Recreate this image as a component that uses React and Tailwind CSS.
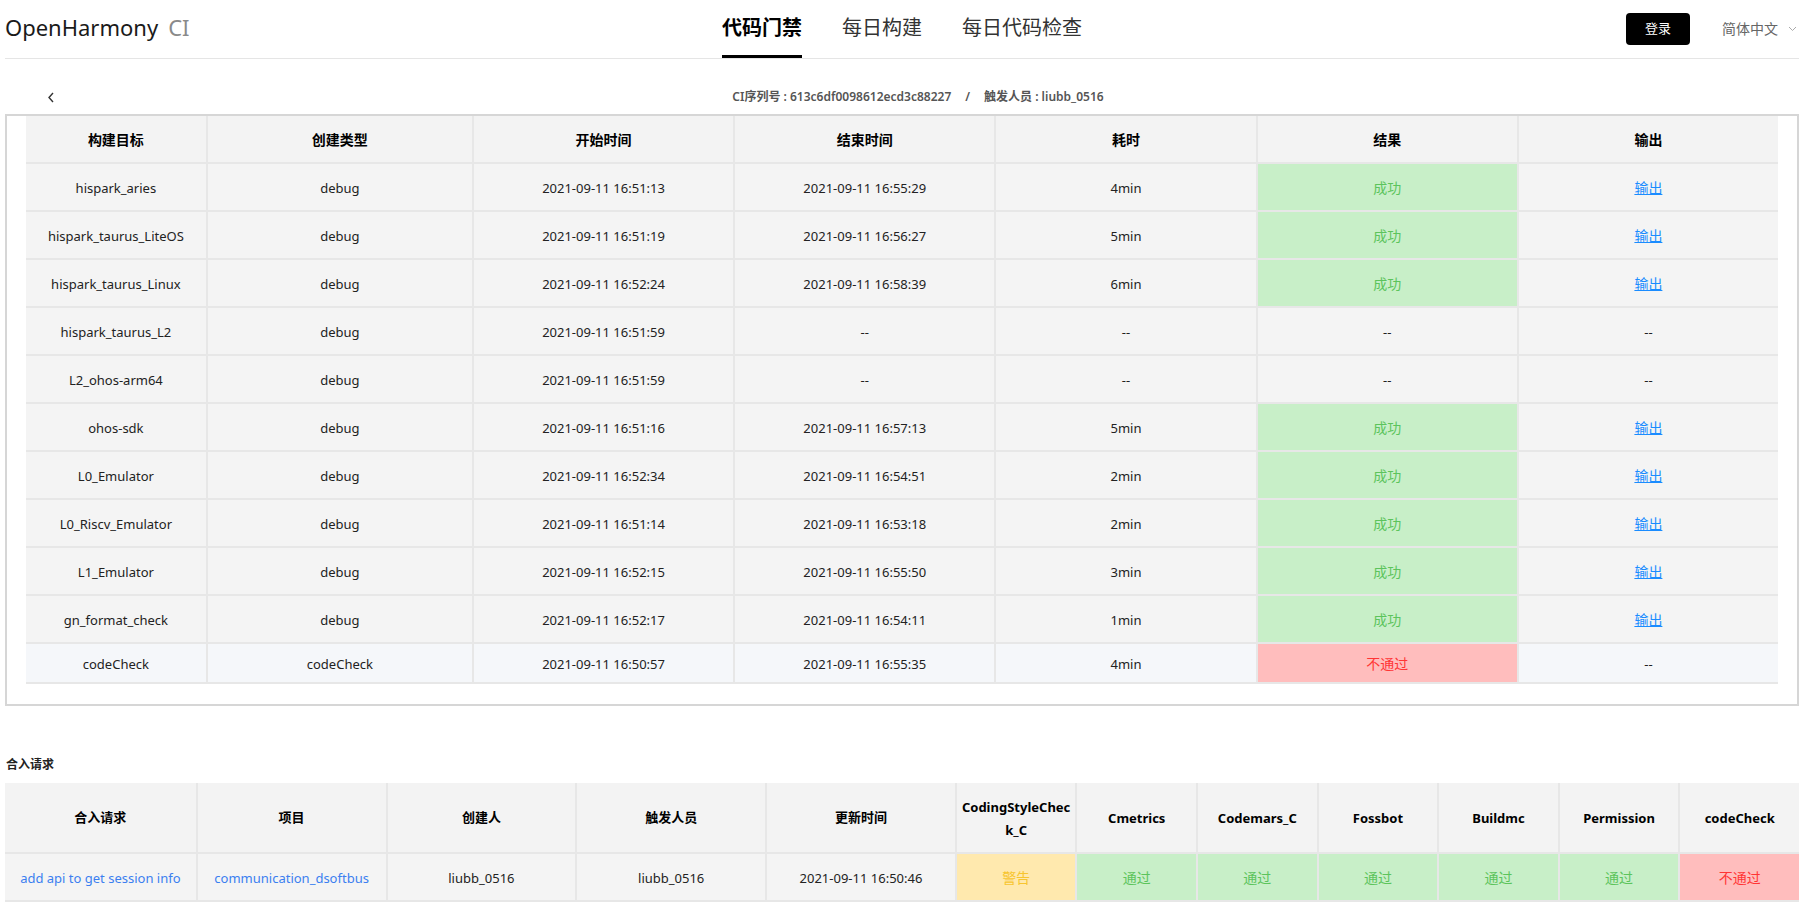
import React from 'react';

const rows = [
  ['hispark_aries', 'debug', '2021-09-11 16:51:13', '2021-09-11 16:55:29', '4min', 'ok'],
  ['hispark_taurus_LiteOS', 'debug', '2021-09-11 16:51:19', '2021-09-11 16:56:27', '5min', 'ok'],
  ['hispark_taurus_Linux', 'debug', '2021-09-11 16:52:24', '2021-09-11 16:58:39', '6min', 'ok'],
  ['hispark_taurus_L2', 'debug', '2021-09-11 16:51:59', '--', '--', 'none'],
  ['L2_ohos-arm64', 'debug', '2021-09-11 16:51:59', '--', '--', 'none'],
  ['ohos-sdk', 'debug', '2021-09-11 16:51:16', '2021-09-11 16:57:13', '5min', 'ok'],
  ['L0_Emulator', 'debug', '2021-09-11 16:52:34', '2021-09-11 16:54:51', '2min', 'ok'],
  ['L0_Riscv_Emulator', 'debug', '2021-09-11 16:51:14', '2021-09-11 16:53:18', '2min', 'ok'],
  ['L1_Emulator', 'debug', '2021-09-11 16:52:15', '2021-09-11 16:55:50', '3min', 'ok'],
  ['gn_format_check', 'debug', '2021-09-11 16:52:17', '2021-09-11 16:54:11', '1min', 'ok'],
];

const heads1 = ['构建目标', '创建类型', '开始时间', '结束时间', '耗时', '结果', '输出'];

function Cell({ children, className = '' }) {
  return (
    <div className={`flex items-center justify-center text-center ${className}`}>{children}</div>
  );
}

function BackIcon() {
  return (
    <svg width="8" height="11" viewBox="0 0 8 11" fill="none">
      <polyline points="6,1 2,5.5 6,10" stroke="#333" strokeWidth="1.4" />
    </svg>
  );
}

function ChevronDown() {
  return (
    <svg width="9" height="6" viewBox="0 0 9 6" fill="none">
      <polyline points="1,1 4.5,4.5 8,1" stroke="#aaa" strokeWidth="1" />
    </svg>
  );
}

export default function App() {
  return (
    <div className="min-h-screen bg-white pl-[5px] pr-[20px] font-['Noto_Sans','Noto_Sans_CJK_SC',sans-serif] text-[#222]">
      {/* Header */}
      <header className="grid grid-cols-[1fr_auto_1fr] h-[59px] border-b border-[#e5e5e5]">
        <div className="flex items-center h-full pb-[4px]">
          <span className="text-[22px] text-[#1a1a1a] leading-none">OpenHarmony</span>
          <span className="text-[22px] text-[#8a8a8a] leading-none ml-[10px]">CI</span>
        </div>
        <nav className="flex h-full gap-[40px]">
          <div className="flex items-center h-full border-b-[3px] border-black text-[20px] font-bold text-black">代码门禁</div>
          <div className="flex items-center h-full border-b-[3px] border-transparent text-[20px] text-[#333]">每日构建</div>
          <div className="flex items-center h-full border-b-[3px] border-transparent text-[20px] text-[#333]">每日代码检查</div>
        </nav>
        <div className="flex items-center justify-end h-full pb-[1px]">
          <button className="w-[64px] h-[32px] bg-black rounded-[4px] text-white text-[13px] flex items-center justify-center">登录</button>
          <span className="ml-[32px] text-[14px] text-[#666]">简体中文</span>
          <span className="ml-[10px] mr-[2px] flex items-center"><ChevronDown /></span>
        </div>
      </header>

      {/* Sub bar */}
      <div className="h-[55px] flex items-end pb-[6px]">
        <div className="grid grid-cols-[1fr_auto_1fr] w-full h-[22px] items-center">
          <div className="pl-[42px] flex items-center"><BackIcon /></div>
          <div className="ml-[32px] text-[12px] font-semibold text-[#555] whitespace-nowrap">
            CI序列号 : 613c6df0098612ecd3c88227<span className="mx-[14px]">/</span>触发人员 : liubb_0516
          </div>
          <div />
        </div>
      </div>

      {/* Build table */}
      <div className="border-2 border-[#d6d6d6] px-[19px] pb-[20px]">
        <div className="grid grid-cols-[181fr_266fr_261fr_261fr_261fr_261fr_261fr] gap-[2px] bg-[#e7e7e7] pb-[2px]">
          {heads1.map((h) => (
            <Cell key={h} className="h-[46px] bg-[#f3f3f3] text-[14px] font-bold text-black">{h}</Cell>
          ))}
          {rows.map((r) => (
            <React.Fragment key={r[0]}>
              <Cell className="h-[46px] bg-[#f4f4f4] text-[13px] pt-[3px]">{r[0]}</Cell>
              <Cell className="h-[46px] bg-[#f4f4f4] text-[13px] pt-[3px]">{r[1]}</Cell>
              <Cell className="h-[46px] bg-[#f4f4f4] text-[13px] pt-[3px]">{r[2]}</Cell>
              <Cell className="h-[46px] bg-[#f4f4f4] text-[13px] pt-[3px]">{r[3]}</Cell>
              <Cell className="h-[46px] bg-[#f4f4f4] text-[13px] pt-[3px]">{r[4]}</Cell>
              {r[5] === 'ok' ? (
                <Cell className="h-[46px] bg-[#c8efc8] text-[14px] text-[#5cc45c]">成功</Cell>
              ) : (
                <Cell className="h-[46px] bg-[#f4f4f4] text-[13px] pt-[3px]">--</Cell>
              )}
              {r[5] === 'ok' ? (
                <Cell className="h-[46px] bg-[#f4f4f4] text-[14px]">
                  <a className="text-[#1a8cff] underline cursor-pointer">输出</a>
                </Cell>
              ) : (
                <Cell className="h-[46px] bg-[#f4f4f4] text-[13px] pt-[3px]">--</Cell>
              )}
            </React.Fragment>
          ))}
          <Cell className="h-[38px] bg-[#f5f7fa] text-[13px] pt-[3px]">codeCheck</Cell>
          <Cell className="h-[38px] bg-[#f5f7fa] text-[13px] pt-[3px]">codeCheck</Cell>
          <Cell className="h-[38px] bg-[#f5f7fa] text-[13px] pt-[3px]">2021-09-11 16:50:57</Cell>
          <Cell className="h-[38px] bg-[#f5f7fa] text-[13px] pt-[3px]">2021-09-11 16:55:35</Cell>
          <Cell className="h-[38px] bg-[#f5f7fa] text-[13px] pt-[3px]">4min</Cell>
          <Cell className="h-[38px] bg-[#ffbdbd] text-[14px] text-[#ff3535]">不通过</Cell>
          <Cell className="h-[38px] bg-[#f5f7fa] text-[13px] pt-[3px]">--</Cell>
        </div>
      </div>

      {/* Merge request */}
      <div className="mt-[51px] mb-[10px] text-[12px] font-semibold leading-[16px] text-[#222] pl-[1px]">合入请求</div>
      <div className="grid grid-cols-[193fr_190fr_190fr_190fr_190fr_120fr_120fr_120fr_120fr_120fr_120fr_120fr] gap-[2px] bg-[#e7e7e7] pb-[2px]">
        <Cell className="h-[69px] bg-[#f3f3f3] text-[13px] font-bold text-black">合入请求</Cell>
        <Cell className="h-[69px] bg-[#f3f3f3] text-[13px] font-bold text-black">项目</Cell>
        <Cell className="h-[69px] bg-[#f3f3f3] text-[13px] font-bold text-black">创建人</Cell>
        <Cell className="h-[69px] bg-[#f3f3f3] text-[13px] font-bold text-black">触发人员</Cell>
        <Cell className="h-[69px] bg-[#f3f3f3] text-[13px] font-bold text-black">更新时间</Cell>
        <Cell className="h-[69px] bg-[#f3f3f3] text-[13px] font-bold text-black leading-[23px] pt-[2px]">
          <span>CodingStyleChec<br />k_C</span>
        </Cell>
        <Cell className="h-[69px] bg-[#f3f3f3] text-[13px] font-bold text-black pt-[3px]">Cmetrics</Cell>
        <Cell className="h-[69px] bg-[#f3f3f3] text-[13px] font-bold text-black pt-[3px]">Codemars_C</Cell>
        <Cell className="h-[69px] bg-[#f3f3f3] text-[13px] font-bold text-black pt-[3px]">Fossbot</Cell>
        <Cell className="h-[69px] bg-[#f3f3f3] text-[13px] font-bold text-black pt-[3px]">Buildmc</Cell>
        <Cell className="h-[69px] bg-[#f3f3f3] text-[13px] font-bold text-black pt-[3px]">Permission</Cell>
        <Cell className="h-[69px] bg-[#f3f3f3] text-[13px] font-bold text-black pt-[3px]">codeCheck</Cell>

        <Cell className="h-[46px] bg-[#f4f4f4] text-[13px] text-[#3b7ff0] pt-[3px]">add api to get session info</Cell>
        <Cell className="h-[46px] bg-[#f4f4f4] text-[13px] text-[#3b7ff0] pt-[3px]">communication_dsoftbus</Cell>
        <Cell className="h-[46px] bg-[#f4f4f4] text-[13px] pt-[3px]">liubb_0516</Cell>
        <Cell className="h-[46px] bg-[#f4f4f4] text-[13px] pt-[3px]">liubb_0516</Cell>
        <Cell className="h-[46px] bg-[#f4f4f4] text-[13px] pt-[3px]">2021-09-11 16:50:46</Cell>
        <Cell className="h-[46px] bg-[#ffe9ae] text-[14px] text-[#f7c52f]">警告</Cell>
        <Cell className="h-[46px] bg-[#c8efc8] text-[14px] text-[#5cc45c]">通过</Cell>
        <Cell className="h-[46px] bg-[#c8efc8] text-[14px] text-[#5cc45c]">通过</Cell>
        <Cell className="h-[46px] bg-[#c8efc8] text-[14px] text-[#5cc45c]">通过</Cell>
        <Cell className="h-[46px] bg-[#c8efc8] text-[14px] text-[#5cc45c]">通过</Cell>
        <Cell className="h-[46px] bg-[#c8efc8] text-[14px] text-[#5cc45c]">通过</Cell>
        <Cell className="h-[46px] bg-[#ffbdbd] text-[14px] text-[#ff3535]">不通过</Cell>
      </div>
    </div>
  );
}
